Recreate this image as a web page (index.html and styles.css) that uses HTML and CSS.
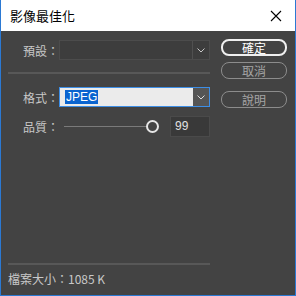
FILE: index.html
```html
<!DOCTYPE html>
<html lang="zh-Hant">
<head>
    <meta charset="UTF-8">
    <title>影像最佳化</title>
    <link rel="stylesheet" href="styles.css">
</head>
<body>
    <div class="window">
        <div class="titlebar">
            <span class="title">影像最佳化</span>
            <svg class="close" width="12" height="12" viewBox="0 0 12 12">
                <path d="M1 1 L11 11 M11 1 L1 11" stroke="#000" stroke-width="1.1" fill="none"/>
            </svg>
        </div>
        <div class="content">
            <div class="main">
                <div class="row">
                    <label class="lbl">預設：</label>
                    <div class="select dim">
                        <span class="value"></span>
                        <span class="arrow">
                            <svg width="8" height="5" viewBox="0 0 8 5"><path d="M0.5 0.5 L4 4 L7.5 0.5" stroke="#c8c8c8" fill="none"/></svg>
                        </span>
                    </div>
                </div>
                <div class="sep"></div>
                <div class="row fmt">
                    <label class="lbl">格式：</label>
                    <div class="select focus">
                        <span class="value"><span class="hl">JPEG</span></span>
                        <span class="arrow">
                            <svg width="8" height="5" viewBox="0 0 8 5"><path d="M0.5 0.5 L4 4 L7.5 0.5" stroke="#dcdcdc" fill="none"/></svg>
                        </span>
                    </div>
                </div>
                <div class="row quality">
                    <label class="lbl">品質：</label>
                    <div class="slider">
                        <div class="track"></div>
                        <div class="thumb"></div>
                    </div>
                    <div class="num">99</div>
                </div>
                <div class="footer">
                    <div class="sep"></div>
                    <div class="size">檔案大小：1085 K</div>
                </div>
            </div>
            <div class="buttons">
                <button class="btn primary">確定</button>
                <button class="btn">取消</button>
                <button class="btn help">說明</button>
            </div>
        </div>
    </div>
</body>
</html>
```

FILE: styles.css
```css
body {
    margin: 0;
    font-family: "Noto Sans CJK TC", "Noto Sans", sans-serif;
    font-size: 12px;
}
.window {
    width: 296px;
    height: 296px;
    box-sizing: border-box;
    border: 1px solid #2b79d3;
    border-top: none;
    display: flex;
    flex-direction: column;
    background-color: #434343;
}
.titlebar {
    height: 31px;
    flex: none;
    background-color: #fff;
    display: flex;
    align-items: center;
    justify-content: space-between;
    padding: 0 13px 0 9px;
}
.title {
    font-size: 13px;
    color: #000;
}
.content {
    flex: 1;
    display: flex;
    padding: 0 0 0 7px;
}
.main {
    width: 202px;
    display: flex;
    flex-direction: column;
}
.row {
    display: flex;
    align-items: center;
    height: 20px;
    margin-top: 9px;
}
.lbl {
    width: 51px;
    text-align: right;
    color: #c8c8c8;
    font-size: 12px;
}
.select {
    display: flex;
    width: 151px;
    height: 20px;
    box-sizing: border-box;
}
.select .value {
    flex: 1;
    display: flex;
    align-items: center;
    padding-left: 5px;
}
.select .arrow {
    width: 16px;
    display: flex;
    align-items: center;
    justify-content: center;
}
.dim {
    border: 1px solid #4c4c4c;
    background-color: #3d3d3d;
}
.dim .arrow {
    border-left: 1px solid #505050;
}
.focus {
    border: 1px solid #3d8ee6;
}
.focus .value {
    background-color: #ebebeb;
}
.focus .arrow {
    background-color: #555;
}
.hl {
    background-color: #0a64d0;
    color: #fff;
    font-family: "Liberation Sans", sans-serif;
    font-size: 12px;
    line-height: 14px;
    padding: 0 1px;
}
.sep {
    height: 2px;
    background-color: #585858;
    margin-top: 12px;
    width: 202px;
}
.fmt {
    margin-top: 13px;
}
.quality {
    margin-top: 9px;
    height: 21px;
}
.slider {
    position: relative;
    width: 89px;
    height: 21px;
    margin-left: 5px;
}
.track {
    position: absolute;
    left: 0;
    right: 0;
    top: 10px;
    height: 1px;
    background-color: #7a7a7a;
}
.thumb {
    position: absolute;
    right: -6px;
    top: 4px;
    width: 9px;
    height: 9px;
    border: 2px solid #e6e6e6;
    border-radius: 50%;
    background-color: #434343;
}
.num {
    margin-left: 17px;
    width: 40px;
    height: 21px;
    box-sizing: border-box;
    border: 1px solid #4a4a4a;
    background-color: #393939;
    color: #e0e0e0;
    font-family: "Liberation Sans", sans-serif;
    font-size: 12px;
    line-height: 19px;
    padding-left: 4px;
}
.footer {
    margin-top: auto;
    padding-bottom: 8px;
}
.footer .sep {
    margin-top: 0;
}
.size {
    color: #c8c8c8;
    margin-top: 6px;
    font-size: 12px;
    line-height: 16px;
}
.buttons {
    display: flex;
    flex-direction: column;
    margin-left: 11px;
    padding-top: 8px;
}
.btn {
    width: 66px;
    height: 17px;
    box-sizing: border-box;
    border: 1.5px solid #8c8c8c;
    border-radius: 8px;
    background: transparent;
    color: #a5a5a5;
    font-family: "Noto Sans CJK TC", sans-serif;
    font-size: 12px;
    line-height: 13px;
    padding: 0;
    margin-bottom: 6px;
}
.primary {
    border: 2px solid #f0f0f0;
    color: #fff;
}
.help {
    margin-top: 6px;
}
```
